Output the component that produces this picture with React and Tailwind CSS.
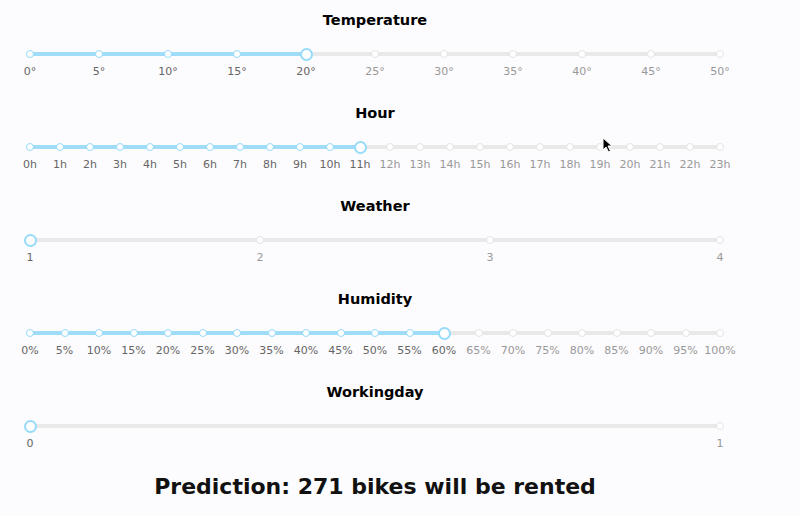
import React from "react";

const range = (n, f) => Array.from({ length: n }, (_, i) => f(i));

const sliders = [
  { title: "Temperature", marks: range(11, (i) => `${i * 5}°`), value: 4 },
  { title: "Hour", marks: range(24, (i) => `${i}h`), value: 11 },
  { title: "Weather", marks: ["1", "2", "3", "4"], value: 0 },
  { title: "Humidity", marks: range(21, (i) => `${i * 5}%`), value: 12 },
  { title: "Workingday", marks: ["0", "1"], value: 0 },
];

function Slider({ title, marks, value }) {
  const pct = (value / (marks.length - 1)) * 100;
  return (
    <section className="flex flex-col items-center">
      <h3 className="text-[14.5px] font-bold leading-[20px] text-black">{title}</h3>

      <div className="relative mt-[17px] h-[14px] w-[690px]">
        <div className="absolute inset-x-0 top-[5px] h-[4px] rounded-full bg-[#e9e9e9]" />
        <div className="absolute left-0 top-[5px] h-[4px] rounded-full bg-[#9fdcf8]" style={{ width: `${pct}%` }} />
        <div className="relative flex h-full items-center justify-between">
          {marks.map((m, i) => (
            <div key={m} className="flex w-0 justify-center">
              {i === value ? (
                <span className="h-[13px] w-[13px] shrink-0 rounded-full border-2 border-[#96dbfa] bg-white" />
              ) : (
                <span
                  className={`h-[8px] w-[8px] shrink-0 rounded-full border-[1.5px] bg-white ${
                    i < value ? "border-[#96dbfa]" : "border-[#e4e4e4]"
                  }`}
                />
              )}
            </div>
          ))}
        </div>
      </div>

      <div className="mt-[4px] flex w-[690px] justify-between text-[11px] leading-[14px]">
        {marks.map((m, i) => (
          <div key={m} className={`flex w-0 justify-center whitespace-nowrap ${i <= value ? "text-[#666]" : "text-[#999]"}`}>
            {m}
          </div>
        ))}
      </div>
    </section>
  );
}

export default function App() {
  return (
    <div
      className="relative h-[516px] w-[800px] overflow-hidden bg-[#fcfbfd]"
      style={{ fontFamily: '"DejaVu Sans", Verdana, sans-serif' }}
    >
      <div className="flex w-[750px] flex-col items-center gap-[24px] pt-[10px]">
        {sliders.map((s) => (
          <Slider key={s.title} {...s} />
        ))}
      </div>
      <div className="flex w-[750px] justify-center pt-[22px]">
        <h2 className="text-[22px] font-bold leading-[28px] text-[#111]">Prediction: 271 bikes will be rented</h2>
      </div>

      {/* mouse pointer left in the capture */}
      <svg className="absolute left-[602px] top-[137px]" width="11" height="16" viewBox="0 0 11 16">
        <path d="M1 1 L1 13 L4 10 L6.5 15 L8.5 14 L6 9 L10 9 Z" fill="#000" stroke="#fff" strokeWidth="1" strokeLinejoin="round" />
      </svg>
    </div>
  );
}
